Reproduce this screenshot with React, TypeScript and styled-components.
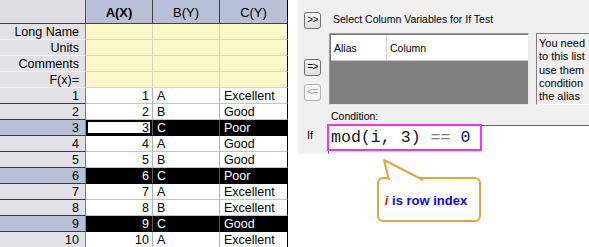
import styled, { createGlobalStyle } from "styled-components"

const GlobalStyle = createGlobalStyle`
    html, body {
        margin: 0;
        padding: 0;
        background: #fff;
        overflow: hidden;
    }
    body {
        font-family: "Liberation Sans", Arial, sans-serif;
    }
`

const grades = ["Excellent", "Good", "Poor", "Good", "Good", "Poor", "Excellent", "Excellent", "Good", "Excellent"]
const letters = ["A", "B", "C"]
const labelRows = ["Long Name", "Units", "Comments", "F(x)="]
const rows = grades.map((grade, i) => ({
    n: i + 1,
    b: letters[i % 3],
    c: grade,
    selected: (i + 1) % 3 === 0
}))

const App = () => {
    return (
        <>
            <GlobalStyle />
            <Page>
                <Sheet>
                    <Corner />
                    <ColHeader $bold>A(X)</ColHeader>
                    <ColHeader>B(Y)</ColHeader>
                    <ColHeader $last>C(Y)</ColHeader>

                    {labelRows.map((label) => (
                        <Row key={label}>
                            <RowHeader $label>{label}</RowHeader>
                            <LabelCell />
                            <LabelCell />
                            <LabelCell $last />
                        </Row>
                    ))}

                    {rows.map((r) => (
                        <Row key={r.n}>
                            <RowHeader $selected={r.selected}>{r.n}</RowHeader>
                            <DataCell $right $selected={r.selected} $active={r.n === 3}>
                                {r.n}
                            </DataCell>
                            <DataCell $selected={r.selected}>{r.b}</DataCell>
                            <DataCell $selected={r.selected} $last>
                                {r.c}
                            </DataCell>
                        </Row>
                    ))}
                </Sheet>

                <Side>
                    <Dialog>
                        <SmallButton>&gt;&gt;</SmallButton>
                        <Title>Select Column Variables for If Test</Title>

                        <ButtonStack>
                            <SmallButton>=&gt;</SmallButton>
                            <SmallButton disabled>&lt;=</SmallButton>
                        </ButtonStack>
                        <ListBox>
                            <ListHeader>
                                <HeaderCol $width={52}>Alias</HeaderCol>
                                <HeaderCol>Column</HeaderCol>
                            </ListHeader>
                            <ListBody />
                        </ListBox>
                        <HelpBox>
                            <div>You need</div>
                            <div>to this list</div>
                            <div>use them</div>
                            <div>condition</div>
                            <div>the alias</div>
                        </HelpBox>

                        <ConditionLabel>Condition:</ConditionLabel>

                        <IfLabel>If</IfLabel>
                        <EditBox>
                            <Highlight>
                                <Code>
                                    mod(i, 3) <Op>==</Op> <Num>0</Num>
                                </Code>
                            </Highlight>
                        </EditBox>
                    </Dialog>

                    <Callout>
                        <Tail width="50" height="22" viewBox="0 0 50 22">
                            <polygon points="12,22 7,1 47,22" fill="#fff" />
                            <polyline
                                points="12,21 7,1 46,21"
                                fill="none"
                                stroke="#e6a53c"
                                strokeWidth="2"
                                strokeLinejoin="round"
                            />
                        </Tail>
                        <CalloutText>
                            <RedI>i</RedI> is row index
                        </CalloutText>
                    </Callout>
                </Side>
            </Page>
        </>
    )
}

const Page = styled.div`
    display: flex;
    flex-flow: row nowrap;
    gap: 10px;
    width: 589px;
    height: 247px;
    overflow: hidden;
`

const Sheet = styled.div`
    display: grid;
    grid-template-columns: 86px 67px 67px 68px;
    grid-template-rows: 24px;
    grid-auto-rows: 16px;
    width: 288px;
    flex-shrink: 0;
    font-size: 12.5px;
    color: #000;
`

const Row = styled.div`
    display: contents;
`

const cellBase = `
    box-sizing: border-box;
    display: flex;
    align-items: center;
    white-space: nowrap;
    overflow: hidden;
    border-right: 1px solid #c4c4c4;
    border-bottom: 1px solid #c4c4c4;
`

const Corner = styled.div`
    ${cellBase}
    background: #dedee2;
    border-right-color: #505050;
    border-bottom-color: #404040;
`

const ColHeader = styled.div<{ $bold?: boolean; $last?: boolean }>`
    ${cellBase}
    justify-content: center;
    background: #b9c1d8;
    font-size: 13px;
    font-weight: ${({ $bold }) => ($bold ? "bold" : "normal")};
    border-right-color: ${({ $last }) => ($last ? "#000" : "#404040")};
    border-bottom-color: #404040;
    padding-top: 1px;
`

const RowHeader = styled.div<{ $label?: boolean; $selected?: boolean }>`
    ${cellBase}
    justify-content: flex-end;
    padding-right: 6px;
    background: ${({ $selected }) => ($selected ? "#b8c0d6" : "#e2e2e6")};
    border-right-color: #808080;
    border-bottom-color: ${({ $label }) => ($label ? "#f4f4f6" : "#3a3a3a")};
`

const LabelCell = styled.div<{ $last?: boolean }>`
    ${cellBase}
    background: #f9f8c6;
    border-color: #d8d8c0;
    border-right-color: ${({ $last }) => ($last ? "#000" : "#d8d8c0")};
`

const DataCell = styled.div<{ $right?: boolean; $selected?: boolean; $active?: boolean; $last?: boolean }>`
    ${cellBase}
    justify-content: ${({ $right }) => ($right ? "flex-end" : "flex-start")};
    padding: ${({ $right }) => ($right ? "0 3px 0 0" : "0 0 0 4px")};
    background: ${({ $selected }) => ($selected ? "#000" : "#fff")};
    color: ${({ $selected }) => ($selected ? "#fff" : "#000")};
    border-right-color: ${({ $last, $selected }) => ($last ? "#000" : $selected ? "#5a5a5a" : "#b4b4b4")};
    border-bottom-color: ${({ $selected }) => ($selected ? "#000" : "#c4c4c4")};

    ${({ $active }) =>
        $active &&
        `
        background: #fff;
        color: #000;
        box-shadow: inset 0 0 0 2px #000;
    `}
`

const Side = styled.div`
    display: flex;
    flex-flow: column nowrap;
    width: 291px;
    flex-shrink: 0;
`

const Dialog = styled.div`
    display: grid;
    grid-template-columns: 17px 200px 1fr;
    grid-template-rows: 21px 72px 20px 29px;
    column-gap: 8px;
    height: 154px;
    box-sizing: border-box;
    padding: 12px 0 0 6px;
    background: #f0f0f0;
    font-size: 10.5px;
    color: #000;
    overflow: hidden;
`

const SmallButton = styled.button`
    box-sizing: border-box;
    width: 17px;
    height: 17px;
    padding: 0 0 1px;
    border: 1px solid #707070;
    border-radius: 3px;
    background: linear-gradient(#f7f7f7, #dedede);
    font-family: "Liberation Sans", Arial, sans-serif;
    font-size: 10px;
    line-height: 14px;
    color: #000;
    letter-spacing: -0.5px;

    &:disabled {
        border-color: #b2b5b8;
        background: #f4f4f4;
        color: #a0a0a0;
    }
`

const Title = styled.div`
    grid-column: 2 / 4;
    padding: 1px 0 0 4px;
    white-space: nowrap;
`

const ButtonStack = styled.div`
    display: flex;
    flex-flow: column nowrap;
    gap: 8px;
    padding-top: 26px;
`

const ListBox = styled.div`
    display: flex;
    flex-flow: column nowrap;
    box-sizing: border-box;
    border: 1px solid #9a9a9a;
    border-right-color: #e8e8e8;
    border-bottom-color: #e8e8e8;
    box-shadow: inset 1px 1px 0 #7a7a7a;
`

const ListHeader = styled.div`
    display: flex;
    height: 25px;
    background: #fff;
    border-bottom: 1px solid #c8c8c8;
    margin: 1px 0 0 1px;
`

const HeaderCol = styled.div<{ $width?: number }>`
    display: flex;
    align-items: center;
    padding-left: 3px;
    width: ${({ $width }) => ($width ? `${$width}px` : "auto")};
    flex-grow: ${({ $width }) => ($width ? 0 : 1)};
    border-right: 1px solid ${({ $width }) => ($width ? "#d4d4d4" : "transparent")};
`

const ListBody = styled.div`
    flex-grow: 1;
    background: #808080;
    margin-left: 1px;
`

const HelpBox = styled.div`
    box-sizing: border-box;
    padding: 3px 0 0 2px;
    border-top: 1px solid #808080;
    border-left: 1px solid #808080;
    border-bottom: 1px solid #fff;
    font-size: 11px;
    line-height: 13.3px;
    white-space: nowrap;
    overflow: hidden;
    margin-left: -1px;
`

const ConditionLabel = styled.div`
    grid-column: 2 / 4;
    padding: 5px 0 0 2px;
`

const IfLabel = styled.div`
    padding: 4px 0 0 3px;
    font-size: 11px;
`

const EditBox = styled.div`
    grid-column: 2 / 4;
    margin-left: -1px;
    background: #fff;
    border-top: 1px solid #646464;
    border-left: 1px solid #646464;
    position: relative;
`

const Highlight = styled.div`
    position: absolute;
    left: -2px;
    top: -2px;
    width: 155px;
    height: 27px;
    box-sizing: border-box;
    border: 2px solid #ff2eff;
    display: flex;
    align-items: center;
    padding: 0 0 1px 2px;
`

const Code = styled.span`
    font-family: "Liberation Mono", "Courier New", monospace;
    font-size: 16.6px;
    color: #141414;
    white-space: pre;
`

const Op = styled.span`
    color: #7a7a7a;
`

const Num = styled.span`
    color: #10105a;
`

const Callout = styled.div`
    position: relative;
    margin: 23px 0 0 79px;
    width: 104px;
    height: 45px;
    box-sizing: border-box;
    border: 2px solid #e6a53c;
    border-radius: 6px;
    display: flex;
    align-items: center;
    justify-content: center;
`

const Tail = styled.svg`
    position: absolute;
    top: -20px;
    left: -2px;
    overflow: visible;
`

const CalloutText = styled.span`
    font-size: 13px;
    font-weight: bold;
    color: #0a0af5;
    padding: 1px 6px 0 0;
`

const RedI = styled.span`
    color: #f01010;
    font-style: italic;
`

export default App
